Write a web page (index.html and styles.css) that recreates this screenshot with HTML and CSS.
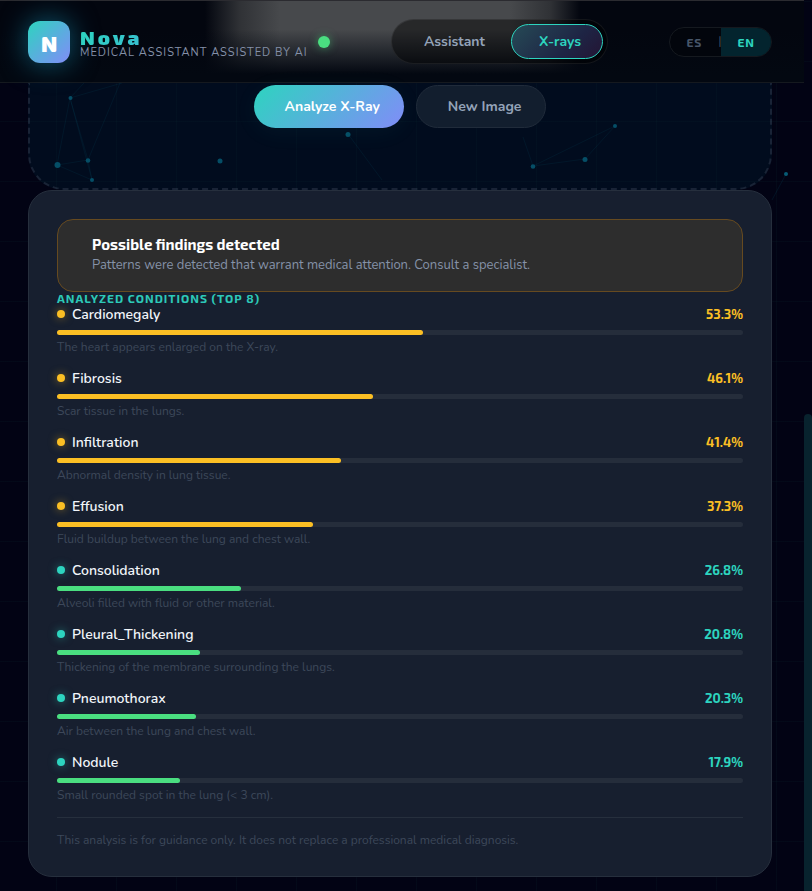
FILE: index.html
```html
<!DOCTYPE html>
<html lang="en">
<head>
    <meta charset="UTF-8">
    <meta name="viewport" content="width=device-width, initial-scale=1.0">
    <title>Nova - Medical Assistant</title>
    <link rel="stylesheet" href="styles.css">
</head>
<body>

<div class="app">
    <svg class="particles" width="812" height="891" aria-hidden="true">
        <g class="links">
            <path d="M70 98L57 165L88 160L70 98L92 180L57 165M88 160L92 180M70 98L122 83M70 98L84 83M88 160L120 83"/>
            <path d="M348 134L382 180M533 166L585 159L615 126L533 166L523 137M786 174L772 200"/>
        </g>
        <g class="nodes">
            <circle cx="70.500" cy="98" r="2"/>
            <circle cx="57.500" cy="165" r="3"/>
            <circle cx="88" cy="160.500" r="2.300"/>
            <circle cx="92" cy="180" r="2"/>
            <circle cx="220" cy="161" r="2.500"/>
            <circle cx="348" cy="134.500" r="2.500"/>
            <circle cx="533" cy="166.500" r="2.300"/>
            <circle cx="585" cy="159.500" r="2.500"/>
            <circle cx="615" cy="126" r="2"/>
            <circle cx="786" cy="174" r="2"/>
        </g>
    </svg>

    <header class="header">
        <div class="brand">
            <div class="logo">N</div>
            <div class="brand-text">
                <div class="brand-name">Nova</div>
                <div class="brand-sub">MEDICAL ASSISTANT ASSISTED BY AI</div>
            </div>
            <span class="status-dot"></span>
        </div>
        <nav class="tabs">
            <button class="tab">Assistant</button>
            <button class="tab active">X-rays</button>
        </nav>
        <div class="lang">
            <button class="lang-btn">ES</button>
            <span class="lang-sep">|</span>
            <button class="lang-btn active">EN</button>
        </div>
    </header>

    <main class="content">
        <section class="dropzone">
            <button class="btn btn-primary">Analyze X-Ray</button>
            <button class="btn btn-secondary">New Image</button>
        </section>

        <section class="results">
            <div class="alert">
                <div class="alert-title">Possible findings detected</div>
                <div class="alert-text">Patterns were detected that warrant medical attention. Consult a specialist.</div>
            </div>
            <h2 class="section-title">ANALYZED CONDITIONS (TOP 8)</h2>
            <ul class="conditions">
                <li class="condition medium">
                    <div class="condition-head"><span class="dot"></span><span class="name">Cardiomegaly</span><span class="value">53.3%</span></div>
                    <div class="bar"><div class="fill" style="width: 53.3%"></div></div>
                    <p class="desc">The heart appears enlarged on the X-ray.</p>
                </li>
                <li class="condition medium">
                    <div class="condition-head"><span class="dot"></span><span class="name">Fibrosis</span><span class="value">46.1%</span></div>
                    <div class="bar"><div class="fill" style="width: 46.1%"></div></div>
                    <p class="desc">Scar tissue in the lungs.</p>
                </li>
                <li class="condition medium">
                    <div class="condition-head"><span class="dot"></span><span class="name">Infiltration</span><span class="value">41.4%</span></div>
                    <div class="bar"><div class="fill" style="width: 41.4%"></div></div>
                    <p class="desc">Abnormal density in lung tissue.</p>
                </li>
                <li class="condition medium">
                    <div class="condition-head"><span class="dot"></span><span class="name">Effusion</span><span class="value">37.3%</span></div>
                    <div class="bar"><div class="fill" style="width: 37.3%"></div></div>
                    <p class="desc">Fluid buildup between the lung and chest wall.</p>
                </li>
                <li class="condition low">
                    <div class="condition-head"><span class="dot"></span><span class="name">Consolidation</span><span class="value">26.8%</span></div>
                    <div class="bar"><div class="fill" style="width: 26.8%"></div></div>
                    <p class="desc">Alveoli filled with fluid or other material.</p>
                </li>
                <li class="condition low">
                    <div class="condition-head"><span class="dot"></span><span class="name">Pleural_Thickening</span><span class="value">20.8%</span></div>
                    <div class="bar"><div class="fill" style="width: 20.8%"></div></div>
                    <p class="desc">Thickening of the membrane surrounding the lungs.</p>
                </li>
                <li class="condition low">
                    <div class="condition-head"><span class="dot"></span><span class="name">Pneumothorax</span><span class="value">20.3%</span></div>
                    <div class="bar"><div class="fill" style="width: 20.3%"></div></div>
                    <p class="desc">Air between the lung and chest wall.</p>
                </li>
                <li class="condition low">
                    <div class="condition-head"><span class="dot"></span><span class="name">Nodule</span><span class="value">17.9%</span></div>
                    <div class="bar"><div class="fill" style="width: 17.9%"></div></div>
                    <p class="desc">Small rounded spot in the lung (&lt; 3 cm).</p>
                </li>
            </ul>
            <p class="disclaimer">This analysis is for guidance only. It does not replace a professional medical diagnosis.</p>
        </section>
    </main>

    <div class="scroll-thumb" aria-hidden="true"></div>
</div>

</body>
</html>
```
FILE: styles.css
```css
* {
    box-sizing: border-box;
    margin: 0;
    padding: 0;
}
body {
    font-family: Nunito, Lato, sans-serif;
    background-color: #020314;
    color: #f1f5f9;
}
button {
    font-family: inherit;
    border: none;
    background: none;
    cursor: pointer;
}
.app {
    position: relative;
    min-height: 100vh;
    overflow: hidden;
    padding-right: 8px;
    background-image:
        linear-gradient(90deg, rgba(45, 212, 191, 0.03) 1px, transparent 1px),
        linear-gradient(rgba(45, 212, 191, 0.03) 1px, transparent 1px);
    background-size: 60px 60px;
    background-position: 56px 1px;
}
.particles {
    position: absolute;
    top: 0;
    left: 0;
}
.links {
    fill: none;
    stroke: #0891b2;
    stroke-opacity: 0.1;
}
.nodes {
    fill: #075b75;
}

/* header */
.header {
    position: relative;
    display: flex;
    justify-content: space-between;
    align-items: center;
    height: 83px;
    padding: 0 32px 0 28px;
    border-top: 1px solid #2b2b30;
    border-bottom: 1px solid #15191f;
    background:
        linear-gradient(transparent 35%, #030811 90%),
        linear-gradient(90deg, transparent 205px, #303236 240px, #47494c 280px, #47494c 510px, #303236 550px, transparent 580px),
        #03060f;
}
.brand {
    display: flex;
    align-items: center;
    gap: 10px;
}
.logo {
    width: 42px;
    height: 42px;
    border-radius: 12px;
    background: linear-gradient(135deg, #2dd4bf, #818cf8);
    box-shadow: 0 0 28px rgba(20, 150, 185, 0.6);
    color: #fff;
    font: 900 22px/44px "Exo 2", Inter, sans-serif;
    text-align: center;
}
.brand-text {
    display: grid;
    gap: 2px;
    padding-top: 2px;
}
.brand-name {
    width: max-content;
    background: linear-gradient(135deg, #2dd4bf, #38bfd0);
    -webkit-background-clip: text;
    background-clip: text;
    color: transparent;
    font: 900 20px/18px "Exo 2", Inter, sans-serif;
    letter-spacing: 3px;
}
.brand-sub {
    color: #8490a8;
    font-size: 11px;
    line-height: 10px;
    letter-spacing: 1px;
    white-space: nowrap;
}
.status-dot {
    width: 12px;
    height: 12px;
    border-radius: 50%;
    background-color: #4ade80;
    box-shadow: 0 0 8px rgba(74, 222, 128, 0.5);
}
.tabs {
    display: flex;
    gap: 4px;
    padding: 4px;
    border: 1px solid rgba(255, 255, 255, 0.07);
    border-radius: 24px;
    background-color: rgba(0, 0, 0, 0.45);
}
.tab {
    height: 35px;
    padding: 0 21px 0 27px;
    border: 1px solid transparent;
    border-radius: 18px;
    color: #94a3b8;
    font-size: 14px;
    font-weight: 700;
}
.tab.active {
    border-color: #2dd4bf;
    background: linear-gradient(135deg, #264a56, #1e2444 65%, #241434);
    color: #2dd4bf;
}
.lang {
    display: flex;
    align-items: center;
    height: 30px;
    overflow: hidden;
    border: 1px solid #15191f;
    border-radius: 15px;
    background-color: #02050c;
}
.lang-btn {
    height: 28px;
    padding: 0 16px;
    color: #475569;
    font: 700 12px "Exo 2", "Open Sans", sans-serif;
    letter-spacing: 1px;
}
.lang-sep {
    width: 3px;
    overflow: hidden;
    color: #475569;
    font-size: 11px;
}
.lang-btn.active {
    background-color: #03242e;
    color: #2dd4bf;
}

/* upload area */
.content {
    position: relative;
    padding: 0 24px 14px 28px;
    margin-right: 8px;
}
.dropzone {
    display: flex;
    justify-content: center;
    gap: 12px;
    padding: 2px 0 60px;
    border: 2px dashed rgba(148, 163, 184, 0.16);
    border-top: none;
    border-radius: 0 0 36px 36px;
    background-color: rgba(0, 40, 60, 0.25);
}
.btn {
    height: 43px;
    padding: 0 24px 0 31px;
    border-radius: 22px;
    font-size: 14px;
    font-weight: 700;
}
.btn-primary {
    background: linear-gradient(135deg, #2dd4bf, #818cf8);
    box-shadow: 0 4px 24px rgba(45, 212, 191, 0.06);
    color: #fff;
}
.btn-secondary {
    border: 1px solid #202b3a;
    background-color: #121e2e;
    color: #94a3b8;
}

/* results */
.results {
    padding: 28px;
    border: 1px solid #262f3d;
    border-radius: 24px;
    background-color: #171f2f;
}
.alert {
    padding: 15px 34px;
    border: 1px solid #664a20;
    border-radius: 16px;
    background-color: #2d2d2d;
}
.alert-title {
    color: #fff;
    font: 700 15px/19px "Exo 2", "Open Sans", sans-serif;
}
.alert-text {
    color: #8592a8;
    font-size: 13px;
    line-height: 22px;
}
.section-title {
    padding-bottom: 2px;
    color: #2dc9b8;
    font: 700 12px/12px "Exo 2", "Open Sans", sans-serif;
    letter-spacing: 1px;
}
.conditions {
    display: grid;
    gap: 16px;
    list-style: none;
}
.condition-head {
    display: flex;
    align-items: center;
    height: 16px;
    margin-bottom: 8px;
}
.dot {
    width: 8px;
    height: 8px;
    margin-right: 7px;
    border-radius: 50%;
}
.name {
    flex: 1;
    font-size: 14px;
    font-weight: 600;
}
.value {
    font: 700 13px "Exo 2", Roboto, sans-serif;
}
.bar {
    height: 5px;
    margin-bottom: 5px;
    border-radius: 3px;
    background-color: #252d3b;
}
.fill {
    height: 5px;
    border-radius: 3px;
}
.medium .dot {
    background-color: #fbbf24;
    box-shadow: 0 0 8px rgba(251, 191, 36, 0.5);
}
.medium .fill {
    background-color: #fbbf24;
}
.medium .value {
    color: #fbbf24;
}
.low .dot {
    background-color: #2dd4bf;
    box-shadow: 0 0 8px rgba(45, 212, 191, 0.5);
}
.low .fill {
    background-color: #4ade80;
}
.low .value {
    color: #2dd4bf;
}
.desc,
.disclaimer {
    color: #3d485a;
    font-size: 12px;
    line-height: 14px;
}
.disclaimer {
    margin-top: 15px;
    padding: 15px 0 1px;
    border-top: 1px solid #262f3d;
}

.scroll-thumb {
    position: absolute;
    top: 414px;
    right: 0;
    bottom: 0;
    width: 8px;
    border-radius: 4px 4px 0 0;
    background-color: #08232e;
}
```
